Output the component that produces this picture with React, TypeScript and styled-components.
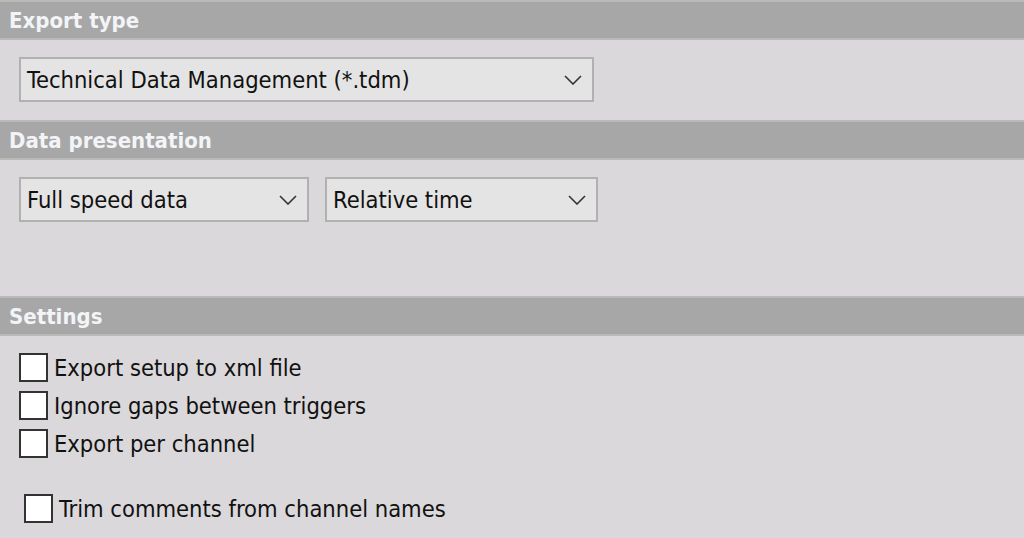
import React from 'react';
import styled, { createGlobalStyle } from 'styled-components';

const GlobalStyle = createGlobalStyle`
  html, body {
    margin: 0;
    padding: 0;
    background: #dad8da;
  }
  body {
    font-family: "DejaVu Sans Condensed", "DejaVu Sans", sans-serif;
  }
`;

const Page = styled.div`
  width: 1024px;
  height: 538px;
  overflow: hidden;
  display: flex;
  flex-direction: column;
  background: #dad8da;
`;

const SectionHeader = styled.div`
  height: 40px;
  box-sizing: border-box;
  background: #a7a7a7;
  border-top: 2px solid #b9b9b9;
  border-bottom: 2px solid #b9b9b9;
  display: flex;
  align-items: center;
  padding-left: 9px;
  color: #f2f4f7;
  font-weight: bold;
  font-size: 22px;
`;

const SectionBody = styled.div<{ $height?: number }>`
  height: ${(p) => (p.$height ? `${p.$height}px` : 'auto')};
  flex: ${(p) => (p.$height ? 'none' : '1')};
  box-sizing: border-box;
  padding: 17px 0 0 19px;
`;

const SelectRow = styled.div`
  display: flex;
  gap: 16px;
`;

const Select = styled.div<{ $width: number }>`
  width: ${(p) => p.$width}px;
  height: 45px;
  box-sizing: border-box;
  border: 2px solid #b1b1b1;
  background: #e4e4e4;
  display: flex;
  align-items: center;
  justify-content: space-between;
  padding: 0 10px 0 6px;
  font-size: 23.5px;
  color: #111;
`;

const Chevron = () => (
  <svg width="18" height="10" viewBox="0 0 18 10">
    <path d="M1 1 L9 9 L17 1" fill="none" stroke="#333" strokeWidth="1.6" />
  </svg>
);

const CheckList = styled.div`
  display: flex;
  flex-direction: column;
  gap: 9px;
`;

const CheckRow = styled.label<{ $offset?: number }>`
  display: flex;
  align-items: center;
  gap: 6px;
  height: 29px;
  margin-left: ${(p) => p.$offset ?? 0}px;
  font-size: 23.5px;
  color: #111;
`;

const Box = styled.span`
  width: 29px;
  height: 29px;
  box-sizing: border-box;
  border: 2px solid #333;
  background: #fff;
  flex: none;
`;

const Spacer = styled.div`
  height: 18px;
`;

export default function App() {
  return (
    <Page>
      <GlobalStyle />
      <SectionHeader>Export type</SectionHeader>
      <SectionBody $height={80}>
        <Select $width={575}>
          Technical Data Management (*.tdm)
          <Chevron />
        </Select>
      </SectionBody>
      <SectionHeader>Data presentation</SectionHeader>
      <SectionBody $height={136}>
        <SelectRow>
          <Select $width={290}>
            Full speed data
            <Chevron />
          </Select>
          <Select $width={273}>
            Relative time
            <Chevron />
          </Select>
        </SelectRow>
      </SectionBody>
      <SectionHeader>Settings</SectionHeader>
      <SectionBody>
        <CheckList>
          <CheckRow>
            <Box />
            Export setup to xml file
          </CheckRow>
          <CheckRow>
            <Box />
            Ignore gaps between triggers
          </CheckRow>
          <CheckRow>
            <Box />
            Export per channel
          </CheckRow>
          <Spacer />
          <CheckRow $offset={5}>
            <Box />
            Trim comments from channel names
          </CheckRow>
        </CheckList>
      </SectionBody>
    </Page>
  );
}
